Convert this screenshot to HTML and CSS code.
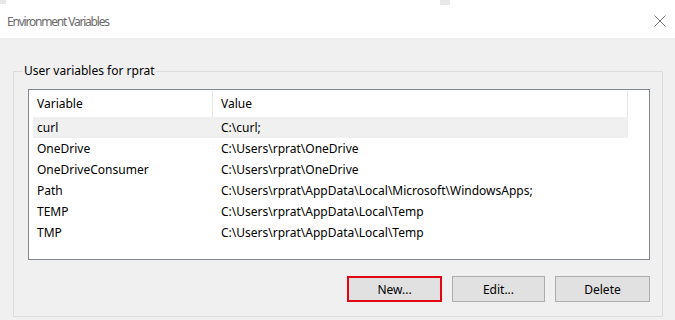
FILE: index.html
```html
<!DOCTYPE html>
<html lang="en">
<head>
    <meta charset="UTF-8">
    <meta name="viewport" content="width=device-width, initial-scale=1.0">
    <title>Environment Variables</title>
    <link rel="stylesheet" href="styles.css">
</head>
<body>
    <div class="window">
        <div class="titlebar">
            <span class="behind behind-left"></span>
            <span class="behind behind-mid"></span>
            <span class="title">Environment Variables</span>
            <button class="close-button" title="Close">
                <svg width="12" height="12" viewBox="0 0 12 12">
                    <path d="M0.5 0.5 L11.5 11.5 M11.5 0.5 L0.5 11.5" stroke="#767676" stroke-width="1" fill="none"/>
                </svg>
            </button>
        </div>

        <div class="content">
            <fieldset class="group">
                <legend>User variables for rprat</legend>

                <div class="listview">
                    <div class="list-row list-header">
                        <div class="cell col-name">Variable</div>
                        <div class="cell col-value">Value</div>
                    </div>
                    <div class="list-row selected">
                        <div class="cell col-name">curl</div>
                        <div class="cell col-value">C:\curl;</div>
                    </div>
                    <div class="list-row">
                        <div class="cell col-name">OneDrive</div>
                        <div class="cell col-value">C:\Users\rprat\OneDrive</div>
                    </div>
                    <div class="list-row">
                        <div class="cell col-name">OneDriveConsumer</div>
                        <div class="cell col-value">C:\Users\rprat\OneDrive</div>
                    </div>
                    <div class="list-row">
                        <div class="cell col-name">Path</div>
                        <div class="cell col-value">C:\Users\rprat\AppData\Local\Microsoft\WindowsApps;</div>
                    </div>
                    <div class="list-row">
                        <div class="cell col-name">TEMP</div>
                        <div class="cell col-value">C:\Users\rprat\AppData\Local\Temp</div>
                    </div>
                    <div class="list-row">
                        <div class="cell col-name">TMP</div>
                        <div class="cell col-value">C:\Users\rprat\AppData\Local\Temp</div>
                    </div>
                </div>

                <div class="button-row">
                    <button class="win-button highlighted">New...</button>
                    <button class="win-button edit-button">Edit...</button>
                    <button class="win-button">Delete</button>
                </div>
            </fieldset>
        </div>
    </div>
</body>
</html>
```

FILE: styles.css
```css
body {
    margin: 0;
    font-family: "Noto Sans", "Open Sans", Arial, sans-serif;
    font-size: 12px;
    color: #000;
    background: #f0f0f0;
}
.window {
    width: 675px;
    height: 320px;
    overflow: hidden;
}
.titlebar {
    position: relative;
    height: 38px;
    background: #fff;
    display: flex;
    align-items: center;
    justify-content: space-between;
    padding: 0 9px 0 7px;
    box-sizing: border-box;
}
.title {
    color: #6a6a6a;
    font-size: 12px;
    letter-spacing: -1.2px;
    margin-top: 5px;
}
.close-button {
    border: none;
    background: none;
    padding: 0;
    width: 12px;
    height: 12px;
    margin-top: 4px;
    display: flex;
}
.behind {
    position: absolute;
    top: 0;
    background: #e8e8e8;
}
.behind-left {
    left: 0;
    width: 6px;
    height: 4px;
}
.behind-mid {
    left: 440px;
    width: 10px;
    height: 5px;
}
.content {
    height: 282px;
    padding: 25px 0 0 13px;
    box-sizing: border-box;
}
.group {
    width: 650px;
    box-sizing: border-box;
    margin: 0;
    border: 1px solid #dcdcdc;
    padding: 10px 12px 14px 14px;
}
.group legend {
    padding: 0 1px;
    margin-left: -5px;
    line-height: 16px;
}
.listview {
    width: 622px;
    height: 171px;
    box-sizing: border-box;
    border: 1px solid #828790;
    background: #fff;
    padding-left: 4px;
}
.list-row {
    display: flex;
    width: 595px;
    height: 21px;
    align-items: center;
}
.list-header {
    height: 27px;
}
.list-header .col-name {
    border-right: 1px solid #e5e5e5;
}
.list-header .col-value {
    border-right: 1px solid #e5e5e5;
}
.list-header .cell {
    height: 26px;
    display: flex;
    align-items: center;
}
.list-row.selected {
    background: #f0f0f0;
}
.cell {
    padding-left: 4px;
    box-sizing: border-box;
    white-space: nowrap;
}
.col-name {
    width: 180px;
}
.col-value {
    flex: 1;
    padding-left: 8px;
}
.button-row {
    display: flex;
    justify-content: flex-end;
    gap: 10px;
    margin-top: 16px;
}
.win-button {
    width: 95px;
    height: 26px;
    box-sizing: border-box;
    background: #e1e1e1;
    border: 1px solid #adadad;
    font-family: inherit;
    font-size: 12px;
    color: #000;
    padding: 0;
}
.edit-button {
    width: 93px;
}
.win-button.highlighted {
    border: 2px solid #e30613;
}
```
